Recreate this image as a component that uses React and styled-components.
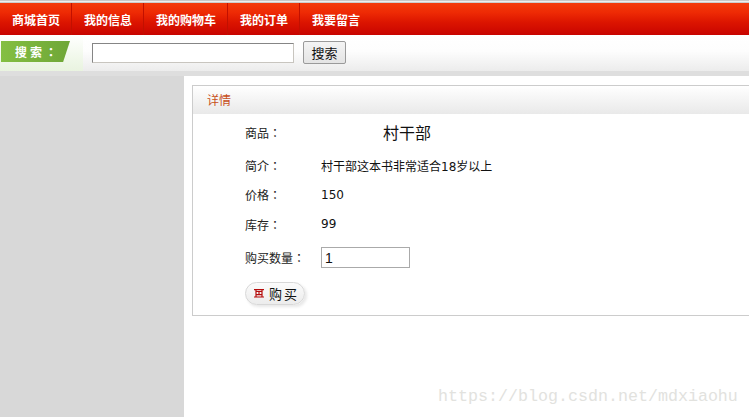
import React from "react";
import styled, { createGlobalStyle } from "styled-components";

const Global = createGlobalStyle`
  html, body { margin: 0; padding: 0; background: #fff; }
  body { font-family: "Liberation Sans", "Noto Sans CJK SC", sans-serif; font-size: 12px; color: #222; }
`;
const Page = styled.div`
  position: relative; width: 749px; height: 417px; overflow: hidden;
  display: flex; flex-direction: column;
`;
const TopLine = styled.div`
  height: 3px; flex: none;
  background: linear-gradient(#c8c8c8, #c8c8c8 1px, #fff 1px, #bbb);
`;
const Nav = styled.nav`
  height: 32px; flex: none; display: flex; align-items: center;
  background: linear-gradient(#f33a0c 0, #ee2a04 30%, #dc1500 60%, #c80400 100%);
`;
const NavItem = styled.a`
  height: 100%; display: flex; align-items: center; padding: 0 11px 0 12px;
  font-size: 12px; font-weight: 700; color: #fff;
  border-right: 1px solid ${p => (p.$last ? "transparent" : "#c21000")};
`;
const SearchBar = styled.div`
  height: 36px; flex: none; display: flex; align-items: center;
  background: linear-gradient(#fff 0, #fdfdfd 45%, #ececec 100%);
`;
const SearchLabelWrap = styled.div`
  width: 83px; height: 36px; flex: none; display: flex; align-items: center; padding-bottom: 3px; box-sizing: border-box;
  background: linear-gradient(#fff, #eff7e8 70%, #e9f3e0);
`;
const SearchLabel = styled.div`
  width: 69px; height: 21px; margin-left: 1px; display: flex; align-items: center; padding-left: 14px; box-sizing: border-box;
  background: linear-gradient(90deg, #84bf42, #6fa637);
  clip-path: polygon(0 0, 100% 0, 90% 100%, 0 100%);
  color: #fff; font-family: "Noto Sans CJK TC", sans-serif; font-weight: 700; font-size: 12px; letter-spacing: 3px;
`;
const SearchInput = styled.input`
  width: 202px; height: 20px; box-sizing: border-box; margin: 0 0 0 9px; padding: 0 2px;
  border: 1px solid; border-color: #858585 #c8c5bf #c8c5bf #858585; background: #fff;
`;
const SearchButton = styled.button`
  width: 43px; height: 23px; margin: 0 0 2px 9px; padding: 0;
  border: 1px solid #9a9a9a; border-radius: 2px; background: linear-gradient(#f4f4f4, #e4e4e4);
  font-family: inherit; font-size: 13px; color: #111;
`;
const Divider = styled.div`
  height: 5px; flex: none; background: #dedede;
`;
const Main = styled.div`
  flex: 1; display: flex; min-height: 0;
`;
const Sidebar = styled.aside`
  width: 184px; flex: none; background: #d8d8d8;
`;
const Content = styled.main`
  flex: 1; min-width: 0; padding: 9px 0 0 8px; background: #fff;
`;
const Panel = styled.section`
  width: 600px; height: 231px; box-sizing: border-box;
  border: 1px solid #ccc;
`;
const PanelHead = styled.div`
  height: 28px; display: flex; align-items: center; padding: 0 0 2px 14px; box-sizing: border-box;
  background: linear-gradient(#fff, #e9e9e9);
  color: #c8501a; font-size: 12px;
`;
const Form = styled.div`
  display: grid; grid-template-columns: 76px 1fr; padding-left: 52px;
  grid-template-rows: 37px 29px 29px 30px 37px 35px; align-items: center;
`;
const Label = styled.div`
  font-family: "Noto Sans CJK TC", sans-serif; font-size: 12px; color: #222;
`;
const Value = styled.div`
  font-family: "DejaVu Sans", "Noto Sans CJK SC", sans-serif; font-size: 12px; color: #111;
`;
const Title = styled(Value)` font-size: 16px; padding: 0 0 2px 62px; `;
const Qty = styled.input`
  width: 89px; height: 21px; box-sizing: border-box; margin: 0; padding: 0 3px;
  border: 1px solid #aaa; font-family: "Liberation Sans", sans-serif; font-size: 14px; color: #111;
`;
const BuyButton = styled.button`
  grid-column: 1 / 3; justify-self: start;
  width: 60px; height: 23px; padding: 0 0 0 8px; display: flex; align-items: center; gap: 5px;
  border: 1px solid #d8d8d8; border-radius: 12px;
  background: linear-gradient(#fbfbfb, #ececec);
  box-shadow: 2px 2px 3px #e8e8e8;
  font-family: inherit; font-size: 13px; letter-spacing: 2px; color: #111;
`;
const Watermark = styled.div`
  position: absolute; left: 438px; top: 387px;
  font-family: "Liberation Mono", monospace; font-size: 16.67px; color: #e2e2de;
  white-space: nowrap;
`;

const CartIcon = () => (
  <svg width="10" height="9" viewBox="0 0 10 9" fill="none" stroke="#b50a0a" strokeWidth="1.2">
    <path d="M0 .6h10M2 2.5h6v3.2H2zM5 2.5v3.2M0 8h10M2 .6v2M8 .6v2M2 5.7V8M8 5.7V8" />
  </svg>
);

const items = ["商城首页", "我的信息", "我的购物车", "我的订单", "我要留言"];

export default function App() {
  return (
    <Page>
      <Global />
      <TopLine />
      <Nav>
        {items.map((t, i) => (
          <NavItem key={t} $last={i === items.length - 1}>{t}</NavItem>
        ))}
      </Nav>
      <SearchBar>
        <SearchLabelWrap><SearchLabel>搜索：</SearchLabel></SearchLabelWrap>
        <SearchInput />
        <SearchButton>搜索</SearchButton>
      </SearchBar>
      <Divider />
      <Main>
        <Sidebar />
        <Content>
          <Panel>
            <PanelHead>详情</PanelHead>
            <Form>
              <Label>商品：</Label><Title>村干部</Title>
              <Label>简介：</Label><Value>村干部这本书非常适合18岁以上</Value>
              <Label>价格：</Label><Value>150</Value>
              <Label>库存：</Label><Value>99</Value>
              <Label>购买数量：</Label><Qty defaultValue="1" />
              <BuyButton><CartIcon />购买</BuyButton>
            </Form>
          </Panel>
        </Content>
      </Main>
      <Watermark>https://blog.csdn.net/mdxiaohu</Watermark>
    </Page>
  );
}
